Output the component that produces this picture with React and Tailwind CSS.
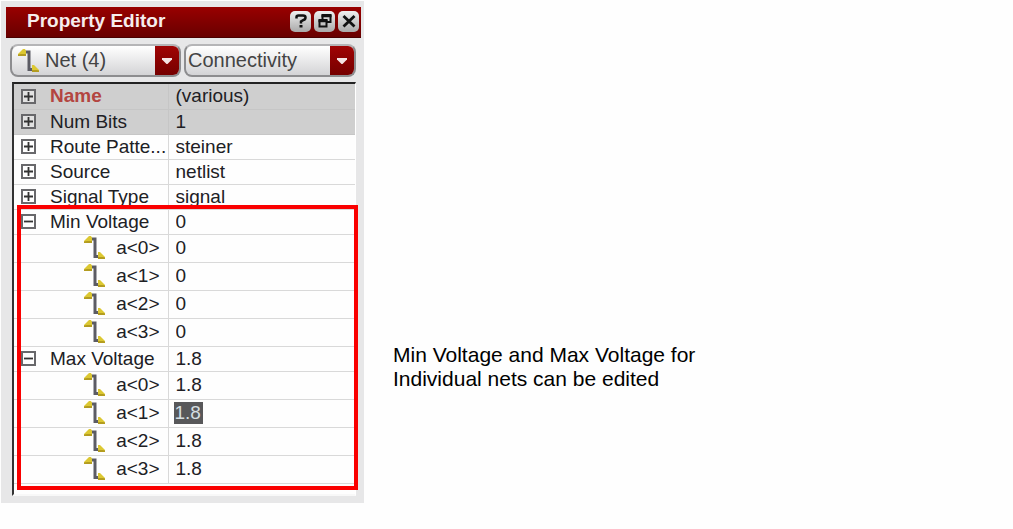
import React from "react";

const summaryRows = [
  { label: "Name", value: "(various)", mixed: true, readOnly: true },
  { label: "Num Bits", value: "1", readOnly: true },
  { label: "Route Patte...", value: "steiner" },
  { label: "Source", value: "netlist" },
  { label: "Signal Type", value: "signal" },
];

const groups = [
  { label: "Min Voltage", value: "0" },
  { label: "Max Voltage", value: "1.8", selected: "a<1>" },
];

const nets = ["a<0>", "a<1>", "a<2>", "a<3>"];

function NetIcon({ className }) {
  return (
    <svg viewBox="0 0 22 26" className={className} aria-hidden="true">
      <path d="M5 4h6v17.500h5" fill="none" stroke="#5c5c64" strokeWidth="3" />
      <path d="M0 8V6l5-5h2l1 2v5z" fill="#dcc832" />
      <path d="M0 8V6.500l3-.5h5v2z" fill="#b39c20" />
      <path d="M14 24v-7h2l5 5v2z" fill="#dcc832" />
      <path d="M14 24v-2h5l2 .5V24z" fill="#b39c20" />
    </svg>
  );
}

function Expander({ open, label }) {
  return (
    <button
      type="button"
      aria-expanded={open}
      aria-label={label}
      className="flex size-[15px] items-center justify-center border-2 border-[#68686b] bg-white/40"
    >
      <svg viewBox="0 0 9 9" className="size-[9px] shrink-0" aria-hidden="true">
        <path d={open ? "M0 4.5h9" : "M0 4.5h9M4.5 0v9"} stroke="#333" strokeWidth="1.8" />
      </svg>
    </button>
  );
}

function TitleButton({ label, children }) {
  return (
    <button
      type="button"
      aria-label={label}
      className="flex size-[21px] items-center justify-center rounded-[5px] bg-linear-to-b from-[#f0f0f0] to-[#a9a9a9]"
    >
      <svg viewBox="0 0 16 16" className="size-4" fill="none" stroke="#111" aria-hidden="true">
        {children}
      </svg>
    </button>
  );
}

function Picker({ label, value, icon, className }) {
  return (
    <div
      className={`relative flex h-[33px] overflow-hidden rounded-lg border-2 border-[#8d8d8f] border-t-[#b5b5b7] bg-linear-to-b from-white to-[#d4d4d6] ${className}`}
    >
      {icon && <NetIcon className="pointer-events-none absolute top-[2px] left-[6px] h-[26px] w-[22px]" />}
      <select
        aria-label={label}
        className={`min-w-0 flex-1 appearance-none bg-transparent pb-[2px] text-[20px] leading-6 text-[#444] ${icon ? "pl-[33px]" : "pl-[2px]"}`}
      >
        <option>{value}</option>
      </select>
      <span className="pointer-events-none flex w-6 items-center justify-center bg-linear-to-b from-[#a00404] to-[#760000]">
        <svg viewBox="0 0 10 6" className="h-[6px] w-[10px]" aria-hidden="true">
          <path d="M0 0h10v1.500L5.500 6h-1L0 1.500z" fill="#f4e4e4" />
        </svg>
      </span>
    </div>
  );
}

function ValueCell({ label, value, readOnly, selected }) {
  return (
    <td className="p-0 pl-[5px]">
      <input
        aria-label={label}
        defaultValue={value}
        readOnly={readOnly}
        className={`block h-[22px] leading-[22px] outline-none ${
          selected ? "w-[29px] bg-[#58585a] px-px text-[#d5dde0]" : "w-full bg-transparent px-[2px] text-[#202024]"
        }`}
      />
    </td>
  );
}

function PropertyRow({ row, open = false }) {
  return (
    <tr className={`h-[25px] border-b ${row.readOnly ? "border-[#c6c6c6] bg-[#cfcfcf]" : "border-[#d9d9d9]"}`}>
      <th
        scope="row"
        className={`border-r p-0 text-left align-top ${row.readOnly ? "border-[#c6c6c6]" : "border-[#d9d9d9]"} ${
          row.mixed ? "font-bold text-[#b34540]" : "font-normal"
        }`}
      >
        <div className="flex h-6 items-center gap-[14px] pl-[7px] leading-6 whitespace-nowrap">
          <Expander open={open} label={`Expand ${row.label}`} />
          {row.label}
        </div>
      </th>
      <ValueCell label={row.label} value={row.value} readOnly={row.readOnly} />
    </tr>
  );
}

function NetRow({ net, group }) {
  return (
    <tr className="h-[28px] border-b border-[#d9d9d9]">
      <th scope="row" className="border-r border-[#d9d9d9] p-0 align-top font-normal">
        <div className="flex h-[26px] items-center justify-end gap-[10px] pr-2 leading-6">
          <NetIcon className="h-[26px] w-[22px]" />
          {net}
        </div>
      </th>
      <ValueCell label={`${group.label} ${net}`} value={group.value} selected={group.selected === net} />
    </tr>
  );
}

export default function App() {
  return (
    <main className="flex min-h-screen items-start gap-[29px] bg-[#fefefe] pt-px pl-px font-['Liberation_Sans',Arial,sans-serif] text-[19px] text-[#202024]">
      <section aria-label="Property Editor" className="w-[363px] shrink-0 bg-[#e7e7e8] pt-[6px] pr-[3px] pb-[7px] pl-[5px]">
        <header className="flex h-[31px] items-center justify-between border-b border-[#4b0000] bg-linear-to-b from-[#990000] to-[#690000] pr-[2px] pb-[2px] pl-[21px]">
          <h1 className="text-[19px] leading-6 font-bold text-[#f6eded]">Property Editor</h1>
          <div className="flex gap-[3px]">
            <TitleButton label="Help">
              <path d="M3.5 5.5V4q0-1.5 2-1.5h4.500q2.500 0 2.500 2t-2 2.500L8 8.500v2" strokeWidth="2.5" />
              <path d="M8 12v2.500" strokeWidth="3" />
            </TitleButton>
            <TitleButton label="Float">
              <path d="M5.500 6V2h8v7h-3M2.500 7h7v6.500h-7z" strokeWidth="2" />
              <path d="M4.500 3h10M1.500 8h9" strokeWidth="2.5" />
            </TitleButton>
            <TitleButton label="Close">
              <path d="M2.500 3l11 10.500M13.500 3l-11 10.500" strokeWidth="2.800" />
            </TitleButton>
          </div>
        </header>

        <div className="flex gap-[3px] pt-[6px] pr-[5px] pb-[5px] pl-1">
          <Picker label="Object" value="Net (4)" icon className="w-[171px]" />
          <Picker label="Property group" value="Connectivity" className="flex-1" />
        </div>

        <div className="relative mr-[5px] ml-[6px] border-t-2 border-r border-b-2 border-l-2 border-t-[#222] border-r-white border-b-[#f8f8f8] border-l-[#333] bg-[#fefefe] pb-[10px]">
          <table className="w-full table-fixed border-collapse">
            <colgroup>
              <col className="w-[154px]" />
              <col />
            </colgroup>
            <tbody>
              {summaryRows.map((row) => (
                <PropertyRow key={row.label} row={row} />
              ))}
              {groups.map((group) => (
                <React.Fragment key={group.label}>
                  <PropertyRow row={group} open />
                  {nets.map((net) => (
                    <NetRow key={net} net={net} group={group} />
                  ))}
                </React.Fragment>
              ))}
            </tbody>
          </table>
          <div className="pointer-events-none absolute top-[121px] -right-[3px] bottom-1 left-[3px] border-4 border-[#fa0000]" />
        </div>
      </section>

      <p className="pt-[342px] text-[21px] leading-6 text-black">
        Min Voltage and Max Voltage for
        <br />
        Individual nets can be edited
      </p>
    </main>
  );
}
